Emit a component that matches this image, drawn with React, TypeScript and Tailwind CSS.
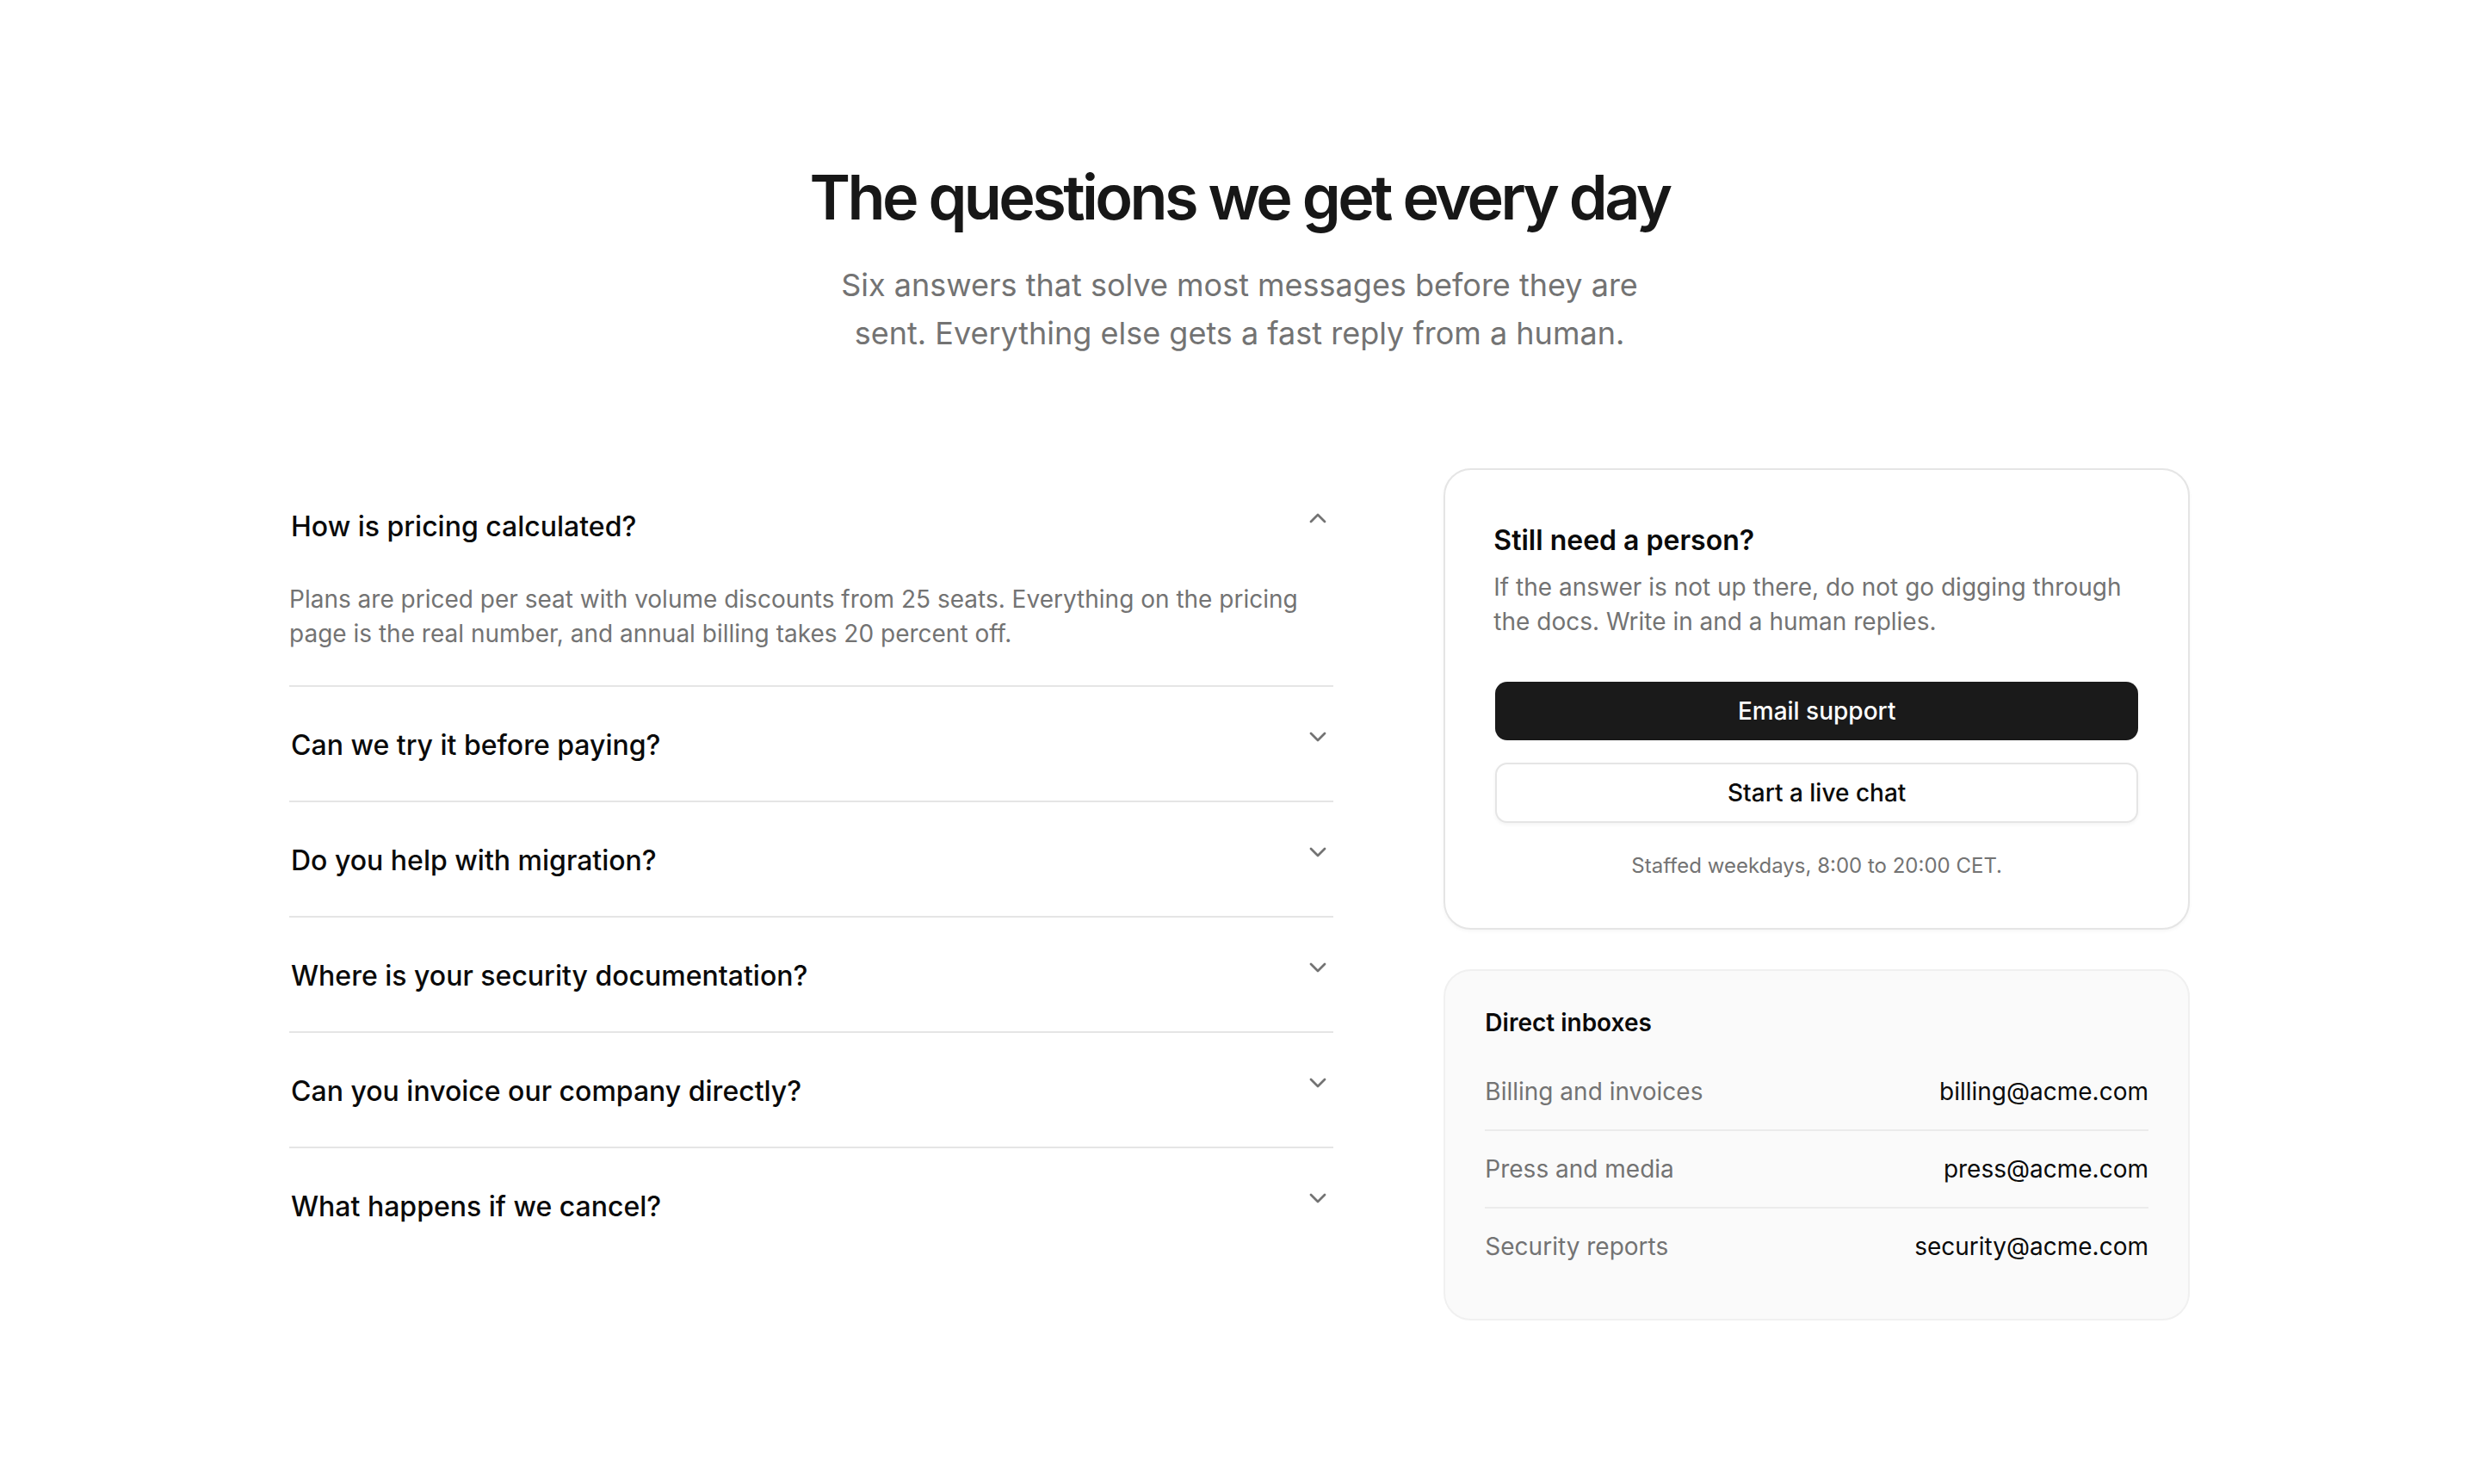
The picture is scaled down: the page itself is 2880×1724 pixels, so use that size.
import { useState } from "react";
import { ChevronDown, ChevronUp } from "lucide-react";

const faqs = [
  {
    q: "How is pricing calculated?",
    a: "Plans are priced per seat with volume discounts from 25 seats. Everything on the pricing page is the real number, and annual billing takes 20 percent off.",
  },
  {
    q: "Can we try it before paying?",
    a: "Every workspace starts with a 14 day trial on the full plan. No card is needed until you decide to stay.",
  },
  {
    q: "Do you help with migration?",
    a: "Yes. Our team imports your existing data and checks it with you before you switch over.",
  },
  {
    q: "Where is your security documentation?",
    a: "The security page links our SOC 2 report, pen test summary and data processing agreement.",
  },
  {
    q: "Can you invoice our company directly?",
    a: "Annual plans can be paid by invoice with 30 day terms. Write to billing and we will set it up.",
  },
  {
    q: "What happens if we cancel?",
    a: "You keep access until the end of the billing period, and you can export everything at any time.",
  },
];

const inboxes = [
  { label: "Billing and invoices", email: "billing@acme.com" },
  { label: "Press and media", email: "press@acme.com" },
  { label: "Security reports", email: "security@acme.com" },
];

export default function App() {
  const [open, setOpen] = useState<number | null>(0);

  return (
    <div className="min-h-screen bg-white font-['Inter','Noto_Sans',sans-serif] text-[#171717] antialiased">
      <section className="mx-auto max-w-[2304px] px-12 pt-[189px] pb-[190px]">
        {/* Header */}
        <div className="flex flex-col items-center text-center">
          <h1 className="text-[72px] leading-[80px] font-semibold tracking-[-0.05em] text-[#171717]">
            The questions we get every day
          </h1>
          <p className="mt-[34px] max-w-[960px] text-[36px] leading-[56px] text-[#737373]">
            Six answers that solve most messages before they are sent. Everything else gets a fast reply from a human.
          </p>
        </div>

        <div className="mt-[129px] grid grid-cols-[7fr_5fr] items-start gap-32">
          {/* FAQ accordion */}
          <div>
            {faqs.map((item, i) => {
              const isOpen = open === i;
              return (
                <div
                  key={item.q}
                  className={i < faqs.length - 1 ? "border-b-2 border-[#e5e5e5]" : ""}
                >
                  <button
                    onClick={() => setOpen(isOpen ? null : i)}
                    className="flex w-full cursor-pointer items-start justify-between gap-8 pt-[42px] pb-[38px] pl-[2px] text-left"
                  >
                    <span className="text-[32px] leading-[52px] font-medium text-[#0a0a0a]">
                      {item.q}
                    </span>
                    {isOpen ? (
                      <ChevronUp size={32} strokeWidth={2} className="mr-[2px] shrink-0 text-[#737373]" />
                    ) : (
                      <ChevronDown size={32} strokeWidth={2} className="mr-[2px] shrink-0 text-[#737373]" />
                    )}
                  </button>
                  {isOpen && (
                    <p className="pb-10 text-[28px] leading-[40px] text-[#737373]">{item.a}</p>
                  )}
                </div>
              );
            })}
          </div>

          {/* Contact side */}
          <div className="flex flex-col gap-[46px]">
            <div className="rounded-[32px] border-2 border-[#e5e5e5] bg-white px-14 pt-[58px] pb-14 shadow-[0_2px_4px_rgba(0,0,0,0.04)]">
              <h2 className="text-[32px] leading-[48px] font-semibold text-[#0a0a0a]">Still need a person?</h2>
              <p className="mt-[10px] text-[28px] leading-[40px] text-[#737373]">
                If the answer is not up there, do not go digging through the docs. Write in and a human replies.
              </p>
              <div className="mt-[50px] flex flex-col gap-[26px] px-[2px]">
                <button className="h-[68px] w-full cursor-pointer rounded-[14px] bg-[#1a1a1a] text-[28px] font-medium text-white">
                  Email support
                </button>
                <button className="h-[70px] w-full cursor-pointer rounded-[14px] border-2 border-[#e5e5e5] bg-white text-[28px] font-medium text-[#0a0a0a] shadow-[0_2px_4px_rgba(0,0,0,0.05)]">
                  Start a live chat
                </button>
              </div>
              <p className="mt-[34px] text-center text-[24px] leading-[32px] text-[#737373]">
                Staffed weekdays, 8:00 to 20:00 CET.
              </p>
            </div>

            <div className="rounded-[32px] border-2 border-[#f0f0f0] bg-[#fafafa] px-[46px] pt-10 pb-10">
              <h3 className="text-[28px] leading-[40px] font-semibold text-[#0a0a0a]">Direct inboxes</h3>
              <ul className="mt-4">
                {inboxes.map((row) => (
                  <li
                    key={row.email}
                    className="flex items-center justify-between border-b-2 border-[#ebebeb] py-6 text-[28px] leading-[40px] last:border-b-0"
                  >
                    <span className="text-[#737373]">{row.label}</span>
                    <span className="text-[#0a0a0a]">{row.email}</span>
                  </li>
                ))}
              </ul>
            </div>
          </div>
        </div>
      </section>
    </div>
  );
}
